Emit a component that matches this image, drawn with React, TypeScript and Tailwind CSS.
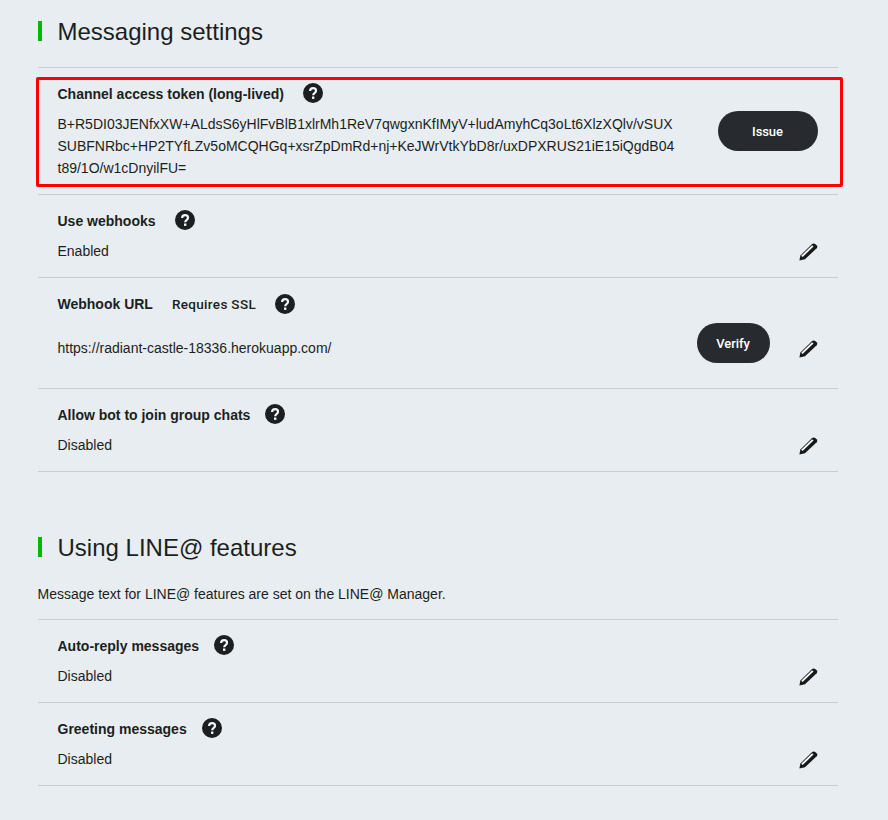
import type { ReactNode } from "react";

function HelpIcon() {
  return (
    <svg width="20" height="20" viewBox="0 0 20 20" className="block shrink-0">
      <circle cx="10" cy="10" r="10" fill="#1b1f21" />
      <path
        d="M7.1 8.1C7.1 6.2 8.2 5.2 10.1 5.2c1.8 0 2.9.9 2.9 2.5 0 1.2-.7 1.8-1.5 2.4-.8.6-1.3 1-1.3 2.2"
        fill="none"
        stroke="#f2f6f8"
        strokeWidth="2.2"
      />
      <rect x="9" y="13.5" width="2.4" height="2.4" fill="#f2f6f8" />
    </svg>
  );
}

function PencilIcon() {
  return (
    <svg width="20" height="20" viewBox="0 0 20 20" className="block shrink-0">
      <path d="M1.4 18.4 2.4 13.4 13.6 2.6Q15.4 1 17.2 2L18.9 3.6Q19.9 4.8 18.7 6.2L7 17.2Z" fill="#16191b" />
      <path d="M3.2 13.8 14.1 3.3 15.5 4.6 4.6 15.1Z" fill="#f4f5f5" />
    </svg>
  );
}

function Heading({ children }: { children: ReactNode }) {
  return (
    <h2 className="flex h-[30px] items-center text-2xl leading-[30px]">
      <span className="mr-4 h-5 w-1 bg-[#00b900]" />
      <span className="pt-0.5">{children}</span>
    </h2>
  );
}

function Title({ label, note, wide }: { label: string; note?: string; wide?: boolean }) {
  return (
    <div className={`flex h-5 items-center ${wide ? "gap-[19px]" : "gap-[15px]"}`}>
      <h3 className="pt-0.5 font-bold leading-5">{label}</h3>
      {note && (
        <span className="pt-px font-['Roboto'] text-[13.5px] font-medium leading-5 tracking-[0.33px]">{note}</span>
      )}
      <div className={note ? "pt-0.5" : ""}>
        <HelpIcon />
      </div>
    </div>
  );
}

function SettingRow({ label, value }: { label: string; value: string }) {
  const wide = label === "Use webhooks";
  return (
    <div className="flex h-[83px] justify-between border-t border-[#c6ccd1] px-5 pt-[15px]">
      <div>
        <Title label={label} wide={wide} />
        <p className="mt-2.5 leading-[22px]">{value}</p>
      </div>
      <div className="pt-8">
        <PencilIcon />
      </div>
    </div>
  );
}

function DarkButton({ children, className }: { children: ReactNode; className: string }) {
  return (
    <button
      className={`h-10 rounded-full bg-[#272a2f] pt-0.5 font-['Roboto'] text-[13px] font-medium tracking-[-0.1px] text-white ${className}`}
    >
      {children}
    </button>
  );
}

export default function App() {
  return (
    <main className="h-[820px] w-[888px] bg-[#e8edf1] pl-[37.5px] pt-4 font-['Liberation_Sans',Arial,sans-serif] text-sm text-[#1b1f21]">
      <div className="w-[800px]">
        <Heading>Messaging settings</Heading>
        <section className="mt-[21px] border-b border-[#c6ccd1]">
          <div className="relative flex h-[127px] justify-between border-t border-[#c6ccd1] px-5 pt-[15px]">
            <div>
              <Title label="Channel access token (long-lived)" wide />
              <p className="mt-2.5 whitespace-nowrap leading-[22px]">
                B+R5DI03JENfxXW+ALdsS6yHlFvBlB1xlrMh1ReV7qwgxnKfIMyV+ludAmyhCq3oLt6XlzXQlv/vSUX
                <br />
                SUBFNRbc+HP2TYfLZv5oMCQHGq+xsrZpDmRd+nj+KeJWrVtkYbD8r/uxDPXRUS21iE15iQgdB04
                <br />
                t89/1O/w1cDnyilFU=
              </p>
            </div>
            <DarkButton className="mt-7 w-[100px]">Issue</DarkButton>
            <div className="pointer-events-none absolute -left-[1.5px] top-[9px] h-[110px] w-[807px] rounded-[2px] border-3 border-[#ff0000]" />
          </div>
          <SettingRow label="Use webhooks" value="Enabled" />
          <div className="flex h-[111px] justify-between border-t border-[#c6ccd1] px-5 pt-[15px]">
            <div>
              <Title label="Webhook URL" note="Requires SSL" wide />
              <p className="mt-6 leading-[22px]">https://radiant-castle-18336.herokuapp.com/</p>
            </div>
            <div className="flex items-start gap-7">
              <DarkButton className="mt-[30px] w-[73px]">Verify</DarkButton>
              <div className="pt-[46px]">
                <PencilIcon />
              </div>
            </div>
          </div>
          <SettingRow label="Allow bot to join group chats" value="Disabled" />
        </section>
        <div className="mt-[60px]">
          <Heading>Using LINE@ features</Heading>
        </div>
        <p className="mt-[21px] leading-[22px]">Message text for LINE@ features are set on the LINE@ Manager.</p>
        <section className="mt-3.5 border-b border-[#c6ccd1]">
          <SettingRow label="Auto-reply messages" value="Disabled" />
          <SettingRow label="Greeting messages" value="Disabled" />
        </section>
      </div>
    </main>
  );
}
